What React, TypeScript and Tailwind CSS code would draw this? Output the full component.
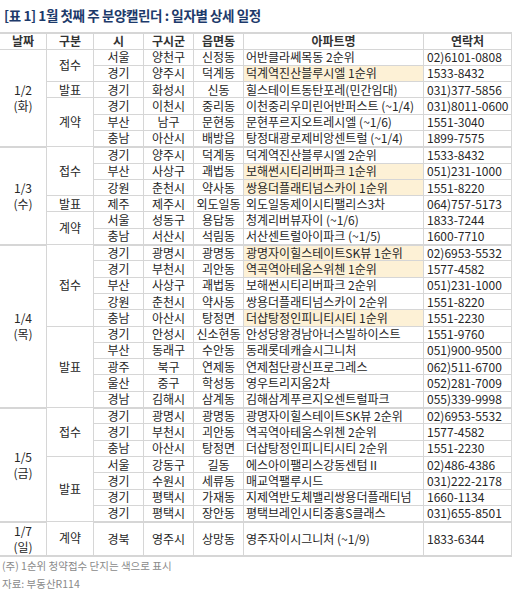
type Row = [string, string, string, string, string, boolean?];
type Group = { kind: string; rows: Row[] };
type Day = { date: string; dow: string; groups: Group[]; tall?: boolean };

const days: Day[] = [
  {
    date: "1/2",
    dow: "(화)",
    groups: [
      {
        kind: "접수",
        rows: [
          ["서울", "양천구", "신정동", "어반클라쎄목동 2순위", "02)6101-0808"],
          ["경기", "양주시", "덕계동", "덕계역진산블루시엘 1순위", "1533-8432", true],
        ],
      },
      { kind: "발표", rows: [["경기", "화성시", "신동", "힐스테이트동탄포레(민간임대)", "031)377-5856"]] },
      {
        kind: "계약",
        rows: [
          ["경기", "이천시", "중리동", "이천중리우미린어반퍼스트 (~1/4)", "031)8011-0600"],
          ["부산", "남구", "문현동", "문현푸르지오트레시엘 (~1/6)", "1551-3040"],
          ["충남", "아산시", "배방읍", "탕정대광로제비앙센트럴 (~1/4)", "1899-7575"],
        ],
      },
    ],
  },
  {
    date: "1/3",
    dow: "(수)",
    groups: [
      {
        kind: "접수",
        rows: [
          ["경기", "양주시", "덕계동", "덕계역진산블루시엘 2순위", "1533-8432"],
          ["부산", "사상구", "괘법동", "보해썬시티리버파크 1순위", "051)231-1000", true],
          ["강원", "춘천시", "약사동", "쌍용더플래티넘스카이 1순위", "1551-8220", true],
        ],
      },
      { kind: "발표", rows: [["제주", "제주시", "외도일동", "외도일동제이시티팰리스3차", "064)757-5173"]] },
      {
        kind: "계약",
        rows: [
          ["서울", "성동구", "용답동", "청계리버뷰자이 (~1/6)", "1833-7244"],
          ["충남", "서산시", "석림동", "서산센트럴아이파크 (~1/5)", "1600-7710"],
        ],
      },
    ],
  },
  {
    date: "1/4",
    dow: "(목)",
    groups: [
      {
        kind: "접수",
        rows: [
          ["경기", "광명시", "광명동", "광명자이힐스테이트SK뷰 1순위", "02)6953-5532", true],
          ["경기", "부천시", "괴안동", "역곡역아테움스위첸 1순위", "1577-4582", true],
          ["부산", "사상구", "괘법동", "보해썬시티리버파크 2순위", "051)231-1000"],
          ["강원", "춘천시", "약사동", "쌍용더플래티넘스카이 2순위", "1551-8220"],
          ["충남", "아산시", "탕정면", "더샵탕정인피니티시티 1순위", "1551-2230", true],
        ],
      },
      {
        kind: "발표",
        rows: [
          ["경기", "안성시", "신소현동", "안성당왕경남아너스빌하이스트", "1551-9760"],
          ["부산", "동래구", "수안동", "동래롯데캐슬시그니처", "051)900-9500"],
          ["광주", "북구", "연제동", "연제첨단광신프로그레스", "062)511-6700"],
          ["울산", "중구", "학성동", "영우트리지움2차", "052)281-7009"],
          ["경남", "김해시", "삼계동", "김해삼계푸르지오센트럴파크", "055)339-9998"],
        ],
      },
    ],
  },
  {
    date: "1/5",
    dow: "(금)",
    groups: [
      {
        kind: "접수",
        rows: [
          ["경기", "광명시", "광명동", "광명자이힐스테이트SK뷰 2순위", "02)6953-5532"],
          ["경기", "부천시", "괴안동", "역곡역아테움스위첸 2순위", "1577-4582"],
          ["충남", "아산시", "탕정면", "더샵탕정인피니티시티 2순위", "1551-2230"],
        ],
      },
      {
        kind: "발표",
        rows: [
          ["서울", "강동구", "길동", "에스아이팰리스강동센텀Ⅱ", "02)486-4386"],
          ["경기", "수원시", "세류동", "매교역팰루시드", "031)222-2178"],
          ["경기", "평택시", "가재동", "지제역반도체밸리쌍용더플래티넘", "1660-1134"],
          ["경기", "평택시", "장안동", "평택브레인시티중흥S클래스", "031)655-8501"],
        ],
      },
    ],
  },
  {
    date: "1/7",
    dow: "(일)",
    tall: true,
    groups: [{ kind: "계약", rows: [["경북", "영주시", "상망동", "영주자이시그니처 (~1/9)", "1833-6344"]] }],
  },
];

const cell = "border border-[#d6d6d6] p-0";

export default function App() {
  return (
    <div
      className="w-[512px] h-[589px] bg-white text-[#262626] overflow-hidden"
      style={{ fontFamily: '"Noto Sans CJK KR", "Noto Sans", sans-serif' }}
    >
      <h1 className="h-[32px] pl-[4px] pt-[6px] text-[13.5px] font-bold tracking-[-0.4px] text-[#1d3a6b] leading-[18px]">
        [표 1] 1월 첫째 주 분양캘린더 : 일자별 상세 일정
      </h1>
      <table className="ml-[-1px] w-[512px] table-fixed border-collapse text-[12px] leading-none">
        <colgroup>
          <col className="w-[47px]" />
          <col className="w-[47px]" />
          <col className="w-[50px]" />
          <col className="w-[50px]" />
          <col className="w-[50px]" />
          <col className="w-[180px]" />
          <col className="w-[88px]" />
        </colgroup>
        <thead>
          <tr className="h-[16px] text-[#333]">
            {["날짜", "구분", "시", "구시군", "읍면동", "아파트명", "연락처"].map((h) => (
              <th key={h} className={`${cell} border-t-2 text-center font-bold`}>
                {h}
              </th>
            ))}
          </tr>
        </thead>
        <tbody>
          {days.map((d) => {
            const total = d.groups.reduce((n, g) => n + g.rows.length, 0);
            let idx = 0;
            return d.groups.map((g) =>
              g.rows.map((r, ri) => {
                const first = idx === 0;
                const last = idx === total - 1;
                idx++;
                const bb = last ? "border-b-2" : "";
                return (
                  <tr key={d.date + r[3]} className={d.tall ? "h-[31px]" : "h-[16.3px]"}>
                    {first && (
                      <td rowSpan={total} className={`${cell} border-b-2 text-center`}>
                        <div className="leading-[16px]">{d.date}</div>
                        <div className="leading-[16px]">{d.dow}</div>
                      </td>
                    )}
                    {ri === 0 && (
                      <td rowSpan={g.rows.length} className={`${cell} ${bb} text-center`}>
                        {g.kind}
                      </td>
                    )}
                    <td className={`${cell} ${bb} text-center`}>{r[0]}</td>
                    <td className={`${cell} ${bb} text-center`}>{r[1]}</td>
                    <td className={`${cell} ${bb} text-center`}>{r[2]}</td>
                    <td className={`${cell} ${bb} pl-[2px] whitespace-nowrap ${r[5] ? "bg-[#fdf1d6]" : ""}`}>
                      {r[3]}
                    </td>
                    <td className={`${cell} ${bb} pl-[3px] whitespace-nowrap`}>{r[4]}</td>
                  </tr>
                );
              })
            );
          })}
        </tbody>
      </table>
      <div className="pl-[2px] text-[10.5px] text-[#8a8a8a] leading-[18px]">
        <div>(주) 1순위 청약접수 단지는 색으로 표시</div>
        <div>자료: 부동산R114</div>
      </div>
    </div>
  );
}
